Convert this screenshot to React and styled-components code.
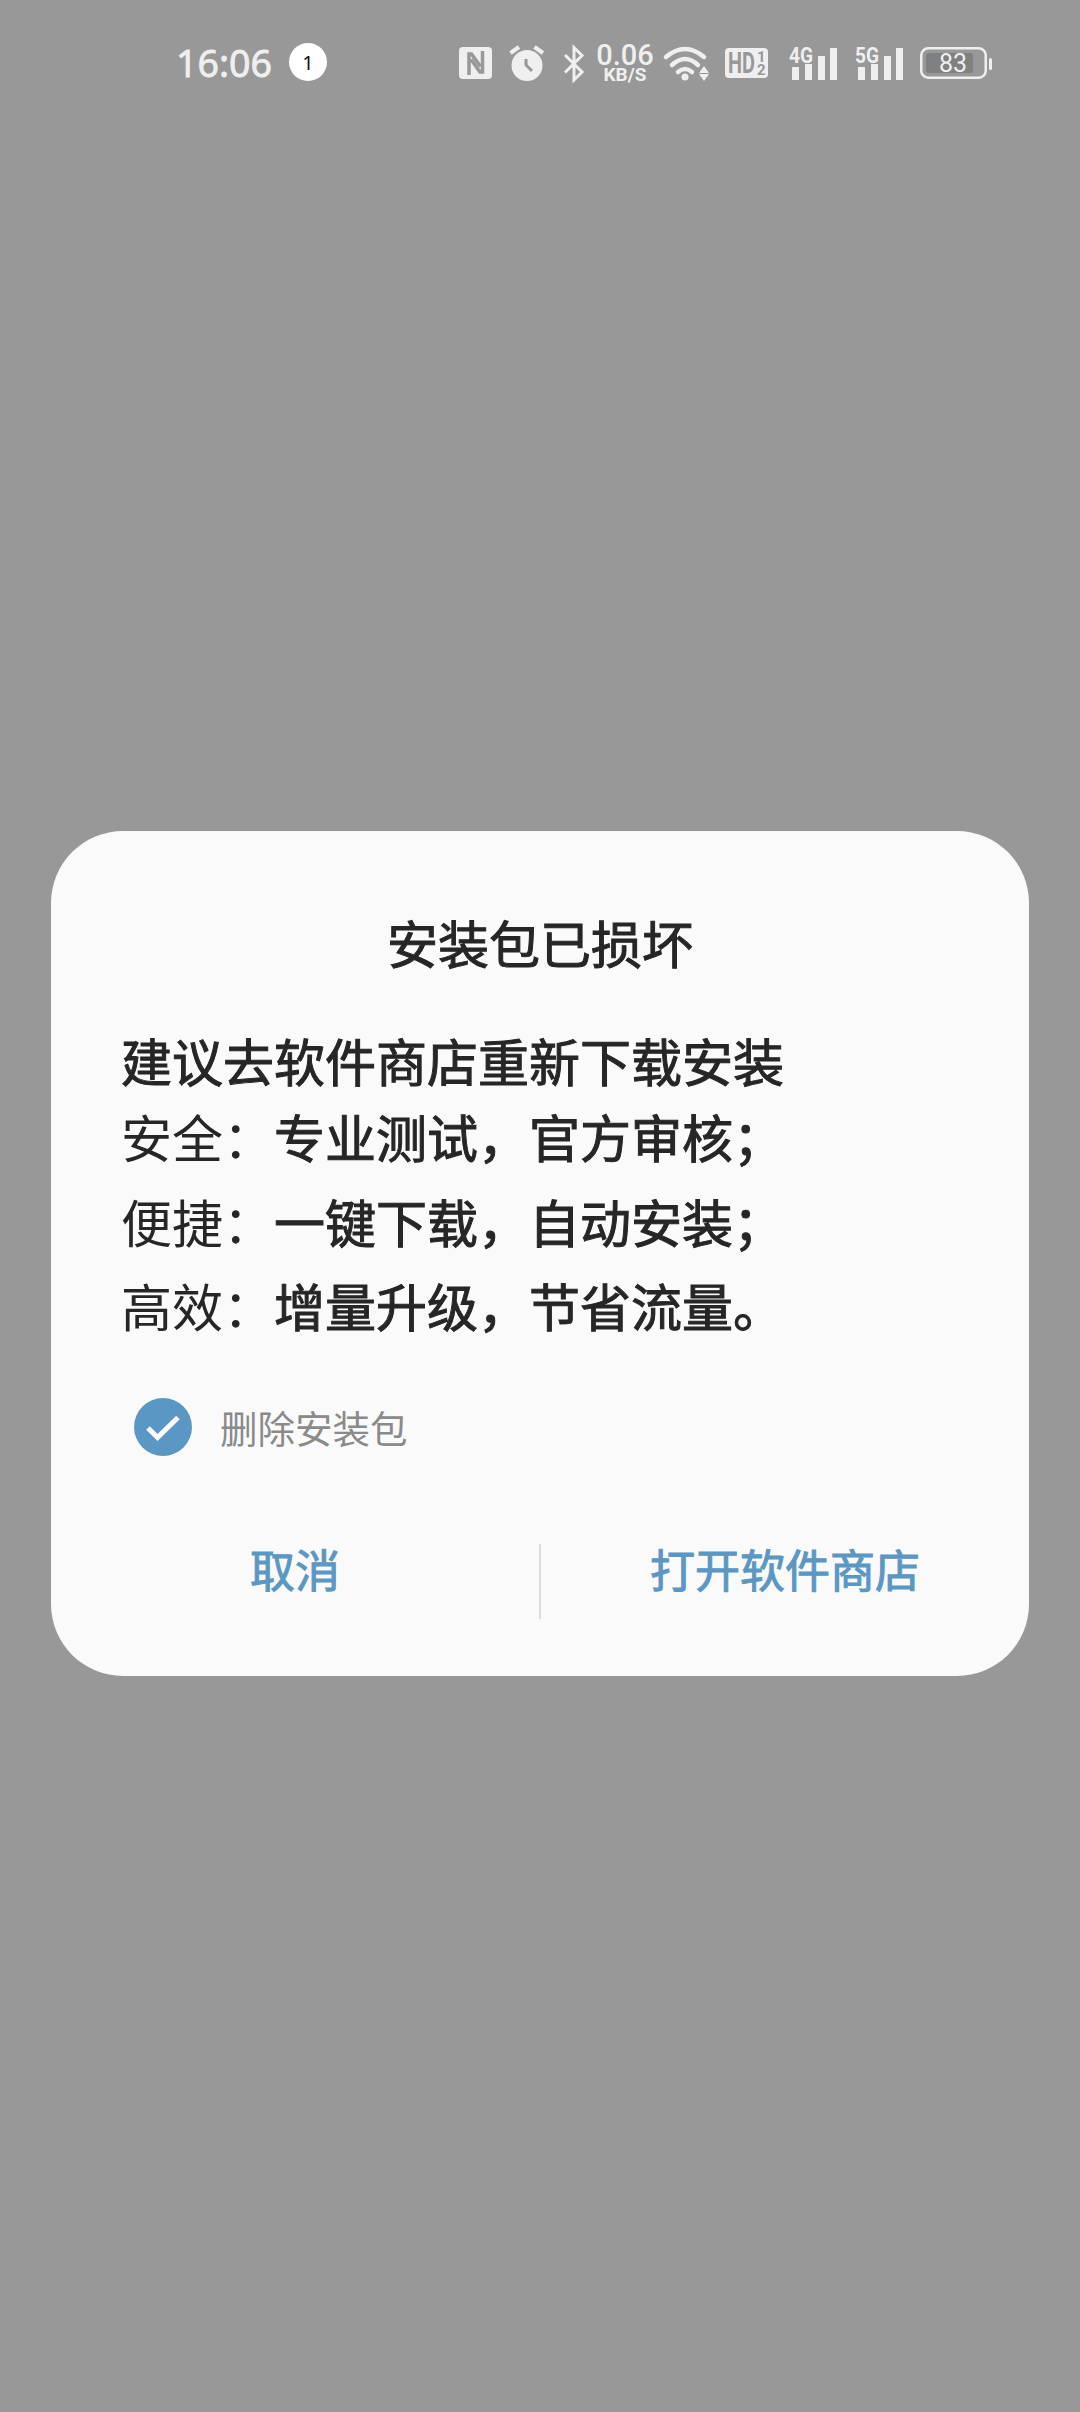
import React from "react";
import styled, { createGlobalStyle } from "styled-components";

const INK = "#efefef";
const BG = "#989898";
const TEXT = "#262626";
const BLUE = "#5b97c4";

const GlobalStyle = createGlobalStyle`
  html, body { margin: 0; padding: 0; background: ${BG}; }
  body { font-family: "Noto Sans CJK SC", "Noto Sans", sans-serif; }
`;

const Page = styled.div`
  width: 1080px;
  height: 2412px;
  background: ${BG};
  overflow: hidden;
`;

const StatusBar = styled.div`
  height: 126px;
  padding: 0 88px 0 176px;
  display: flex;
  align-items: center;
  justify-content: space-between;
`;

const Group = styled.div`
  display: flex;
  align-items: center;
`;

const Clock = styled.span`
  width: 94px;
  font-family: "Noto Sans", sans-serif;
  font-size: 37.5px;
  line-height: 48px;
  color: ${INK};
  -webkit-text-stroke: 0.8px ${INK};
  white-space: nowrap;
`;

const Badge = styled.span`
  width: 38px;
  height: 38px;
  margin: 0 0 2px 19px;
  border-radius: 50%;
  background: #fff;
  color: #111;
  font-family: "Noto Sans", sans-serif;
  font-size: 20px;
  display: flex;
  align-items: center;
  justify-content: center;
`;

const Icon = styled.svg`
  display: block;
  flex: none;
  overflow: visible;
  margin-left: ${(p) => p.$gap || 0}px;
`;

const Speed = styled.div`
  width: 54px;
  margin-left: 13px;
  color: ${INK};
  font-family: "Roboto", sans-serif;
  display: flex;
  flex-direction: column;
  align-items: center;
  white-space: nowrap;
`;

const SpeedValue = styled.div`
  font-size: 29px;
  line-height: 23px;
  font-weight: 500;
`;

const SpeedUnit = styled.div`
  font-size: 19px;
  line-height: 15px;
  font-weight: 700;
`;

const Card = styled.div`
  width: 978px;
  height: 845px;
  margin: 705px 0 0 51px;
  padding-top: 81px;
  box-sizing: border-box;
  border-radius: 72px;
  background: #fafafa;
  color: ${TEXT};
`;

const Title = styled.h1`
  margin: 0;
  font-size: 51px;
  line-height: 60px;
  font-weight: 400;
  -webkit-text-stroke: 1px ${TEXT};
  text-align: center;
`;

const Lead = styled.p`
  margin: 52px 0 0 70px;
  font-size: 51px;
  line-height: 72px;
  -webkit-text-stroke: 1px ${TEXT};
`;

const Points = styled.div`
  margin: -2px 0 0 70px;
`;

const Point = styled.p`
  margin: 0;
  font-size: 51px;
  line-height: 84.5px;
  white-space: nowrap;
`;

const Strong = styled.span`
  -webkit-text-stroke: 1px ${TEXT};
`;

const CheckRow = styled.label`
  margin: 50.5px 0 0 83px;
  height: 58px;
  display: flex;
  align-items: center;
  gap: 28px;
`;

const CheckDot = styled.span`
  width: 58px;
  height: 58px;
  border-radius: 50%;
  background: ${BLUE};
  display: block;
`;

const CheckText = styled.span`
  font-size: 37.5px;
  line-height: 58px;
  color: #8a8a8a;
`;

const Actions = styled.div`
  margin-top: 88px;
  display: grid;
  grid-template-columns: 1fr 2px 1fr;
`;

const Action = styled.button`
  height: 50px;
  padding: 0;
  border: none;
  background: none;
  font-family: inherit;
  font-size: 45px;
  line-height: 50px;
  color: ${BLUE};
  -webkit-text-stroke: 1px ${BLUE};
`;

const Divider = styled.div`
  height: 75px;
  background: #dcdcdc;
`;

const NfcIcon = () => (
  <Icon width="33" height="32" viewBox="0 0 33 32">
    <rect width="33" height="32" rx="4" fill={INK} />
    <path d="M10 28V7h2.500l9 12.500M23.500 4v21H21l-9-12.500" fill="none" stroke={BG} strokeWidth="3.500" />
  </Icon>
);

const AlarmIcon = () => (
  <Icon $gap={17} width="35" height="36" viewBox="0 0 35 36">
    <circle cx="18" cy="20.500" r="15.500" fill={INK} />
    <path d="M17 14v6l6 6" fill="none" stroke={BG} strokeWidth="3" />
    <path d="M1.500 8L10 2M25.500 2L34 8" fill="none" stroke={INK} strokeWidth="4" />
  </Icon>
);

const BluetoothIcon = () => (
  <Icon $gap={19} width="22" height="35" viewBox="0 0 22 35">
    <path d="M2 9l17 17-8 8V1.500l8 8L2 26.500" fill="none" stroke={INK} strokeWidth="3" />
  </Icon>
);

const WifiIcon = () => (
  <Icon $gap={11} width="46" height="35" viewBox="0 0 46 35">
    <g fill="none" stroke={INK} strokeWidth="4.500" strokeLinecap="round">
      <path d="M3 11Q22-5 41 11" />
      <path d="M9 19Q22 7 35 19" />
      <path d="M15 26Q22 20 29 26" />
    </g>
    <circle cx="22" cy="31" r="3.500" fill={INK} />
    <path d="M41 20l5 7H36zM36 28h10l-5 7z" fill={INK} />
  </Icon>
);

const HdIcon = () => (
  <Icon $gap={16} width="43" height="30" viewBox="0 0 43 30">
    <rect width="43" height="30" rx="4" fill={INK} />
    <text x="3" y="25" fontFamily="Roboto" fontWeight="700" fontSize="29" fill={BG} textLength="27" lengthAdjust="spacingAndGlyphs">HD</text>
    <text x="32" y="14" fontFamily="Roboto" fontWeight="700" fontSize="15" fill={BG}>1</text>
    <text x="32" y="27" fontFamily="Roboto" fontWeight="700" fontSize="15" fill={BG}>2</text>
  </Icon>
);

const SignalIcon = ({ label, gap }) => (
  <Icon $gap={gap} width="48" height="33" viewBox="0 0 48 33">
    <text x="0" y="16" fontFamily="Roboto" fontWeight="700" fontSize="22" fill={INK} textLength="24" lengthAdjust="spacingAndGlyphs">{label}</text>
    <path d="M3 20h7v13H3zM16 17h7v16h-7zM29 9h7v24h-7zM41 1h7v32h-7z" fill={INK} />
  </Icon>
);

const BatteryIcon = () => (
  <Icon $gap={17} width="72" height="32" viewBox="0 0 72 32">
    <rect x="1.250" y="1.250" width="64.500" height="29.500" rx="7" fill="none" stroke={INK} strokeWidth="2.500" />
    <rect x="6" y="6" width="47" height="20" rx="2" fill="#808080" />
    <rect x="69" y="11" width="3" height="12" rx="1.500" fill={INK} />
    <text x="33" y="25" textAnchor="middle" fontFamily="Roboto" fontSize="25" fill={INK}>83</text>
  </Icon>
);

const CheckMark = () => (
  <svg width="58" height="58" viewBox="0 0 58 58" style={{ display: "block" }}>
    <path d="M14 30l9.500 9.500L44 19.500" fill="none" stroke="#fff" strokeWidth="5" />
  </svg>
);

const App = () => (
  <Page>
    <GlobalStyle />
    <StatusBar>
      <Group>
        <Clock>16:06</Clock>
        <Badge>1</Badge>
      </Group>
      <Group>
        <NfcIcon />
        <AlarmIcon />
        <BluetoothIcon />
        <Speed>
          <SpeedValue>0.06</SpeedValue>
          <SpeedUnit>KB/S</SpeedUnit>
        </Speed>
        <WifiIcon />
        <HdIcon />
        <SignalIcon label="4G" gap={21} />
        <SignalIcon label="5G" gap={18} />
        <BatteryIcon />
      </Group>
    </StatusBar>
    <Card>
      <Title>安装包已损坏</Title>
      <Lead>建议去软件商店重新下载安装</Lead>
      <Points>
        <Point>安全：<Strong>专业测试，官方审核；</Strong></Point>
        <Point>便捷：<Strong>一键下载，自动安装；</Strong></Point>
        <Point>高效：<Strong>增量升级，节省流量。</Strong></Point>
      </Points>
      <CheckRow>
        <CheckDot><CheckMark /></CheckDot>
        <CheckText>删除安装包</CheckText>
      </CheckRow>
      <Actions>
        <Action>取消</Action>
        <Divider />
        <Action>打开软件商店</Action>
      </Actions>
    </Card>
  </Page>
);

export default App;
